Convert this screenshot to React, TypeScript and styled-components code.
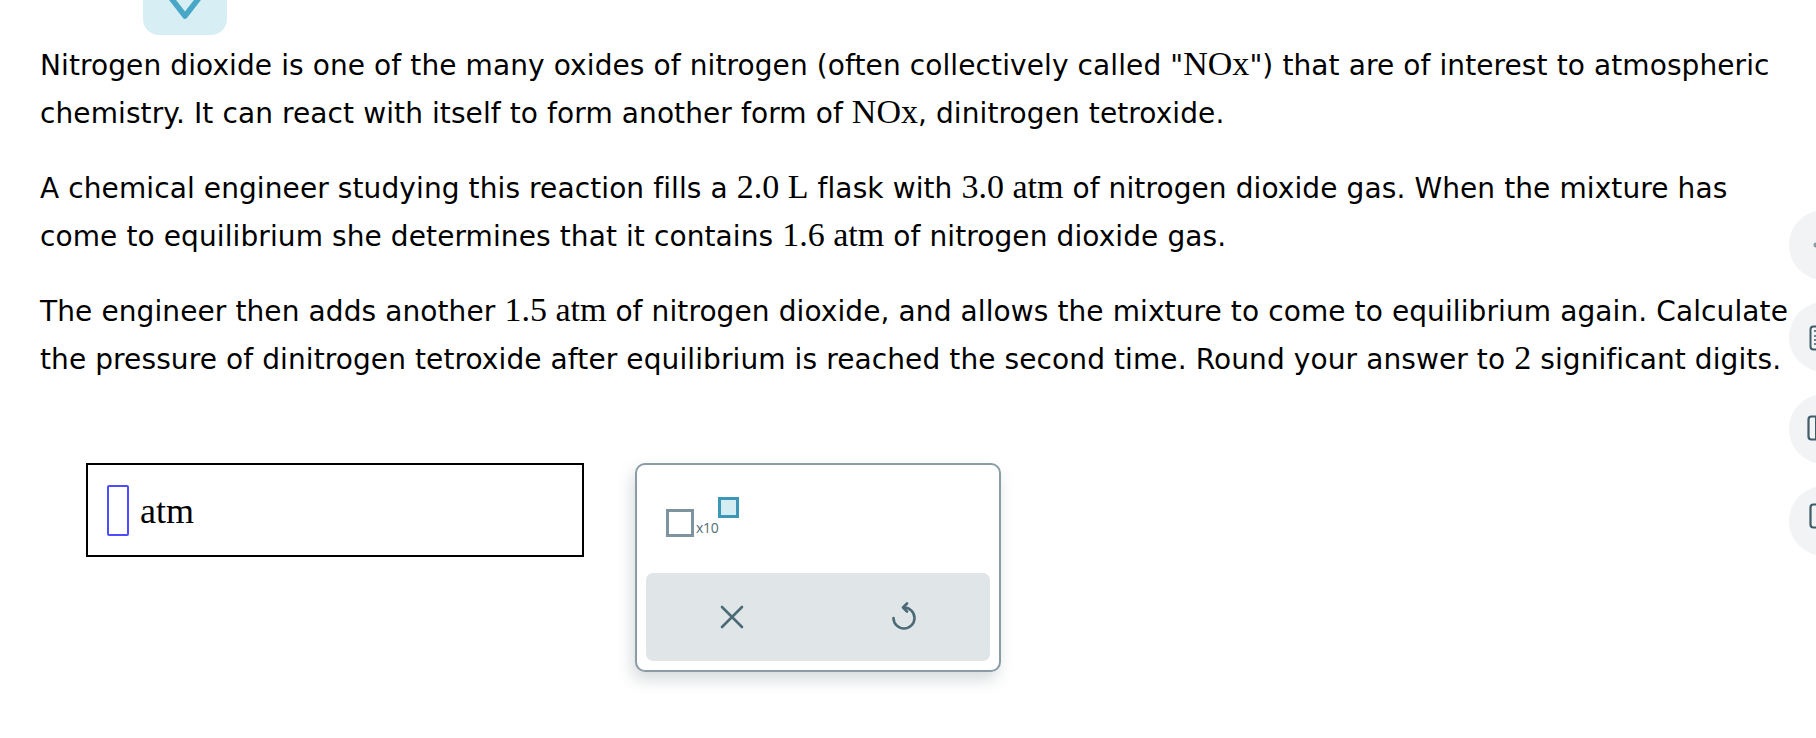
import React from "react";
import styled, { createGlobalStyle } from "styled-components";

const GlobalStyle = createGlobalStyle`
  html, body {
    margin: 0;
    padding: 0;
    background: #ffffff;
  }
  body {
    font-family: "DejaVu Sans", Verdana, sans-serif;
    color: #000;
    overflow: hidden;
  }
`;

const Page = styled.div`
  position: relative;
  width: 1816px;
  height: 738px;
  padding-left: 40px;
  box-sizing: border-box;
`;

const CollapseTab = styled.button`
  display: flex;
  justify-content: center;
  align-items: flex-start;
  margin-left: 103px;
  width: 84px;
  height: 35px;
  padding: 0;
  border: none;
  border-radius: 0 0 16px 16px;
  background: #d6eef4;
  overflow: hidden;
  cursor: pointer;
`;

const Question = styled.div`
  margin-top: 7px;
  font-size: 28px;
  letter-spacing: 0.1px;
  line-height: 47.5px;
`;

const Para = styled.p`
  margin: 0 0 28px;
  white-space: nowrap;
`;

const MathText = styled.span`
  font-family: "Liberation Serif", "Times New Roman", serif;
  font-size: 34px;
  letter-spacing: 0;
  line-height: 1;
`;

const AnswerRow = styled.div`
  display: flex;
  align-items: flex-start;
  margin-top: 80px;
  margin-left: 46px;
  gap: 51px;
`;

const AnswerBox = styled.div`
  display: flex;
  align-items: center;
  gap: 11px;
  width: 498px;
  height: 94px;
  box-sizing: border-box;
  border: 2px solid #000;
  padding-left: 19px;
`;

const Cursor = styled.div`
  width: 22px;
  height: 51px;
  box-sizing: border-box;
  border: 2px solid #4d4dff;
  border-radius: 2px;
`;

const Unit = styled.span`
  font-family: "Liberation Serif", "Times New Roman", serif;
  font-size: 36px;
  margin-top: 2px;
`;

const Keypad = styled.div`
  display: flex;
  flex-direction: column;
  width: 366px;
  height: 209px;
  box-sizing: border-box;
  border: 2px solid #8a9da7;
  border-radius: 10px;
  padding: 0 9px 9px;
  background: #fff;
  box-shadow: -3px 8px 16px rgba(60, 80, 90, 0.2);
`;

const KeyArea = styled.div`
  flex: 1;
  padding: 32px 0 0 20px;
`;

const SciKey = styled.button`
  display: flex;
  align-items: flex-start;
  padding: 0;
  border: none;
  background: none;
  cursor: pointer;
`;

const Slot = styled.span<{ $active?: boolean; $size: number }>`
  display: block;
  width: ${(p) => p.$size}px;
  height: ${(p) => p.$size}px;
  box-sizing: border-box;
  border: 3px solid ${(p) => (p.$active ? "#3b97b5" : "#7d949e")};
  background: ${(p) => (p.$active ? "#d4edf3" : "#fff")};
`;

const Base = styled.span`
  align-self: flex-end;
  font-family: "Open Sans", "DejaVu Sans", sans-serif;
  font-size: 14px;
  line-height: 14px;
  color: #4f6e7a;
  margin: 0 0 2px 2px;
  letter-spacing: -0.3px;
`;

const ActionBar = styled.div`
  display: flex;
  height: 88px;
  border-radius: 7px;
  background: #e0e5e8;
`;

const ActionButton = styled.button`
  flex: 1;
  display: flex;
  align-items: center;
  justify-content: center;
  padding: 0;
  border: none;
  background: none;
  color: #4b6a76;
  cursor: pointer;
`;

const ToolRail = styled.div`
  position: absolute;
  left: 1789px;
  top: 210px;
  display: flex;
  flex-direction: column;
  gap: 22px;
`;

const RailButton = styled.div`
  position: relative;
  width: 70px;
  height: 70px;
  border-radius: 50%;
  background: #f1f3f5;
`;

const RailIcon = styled.svg<{ $left: number; $top: number }>`
  position: absolute;
  left: ${(p) => p.$left}px;
  top: ${(p) => p.$top}px;
`;

function Chevron() {
  return (
    <svg width="40" height="22" viewBox="0 0 40 22">
      <path d="M6 -2 L20 16 L34 -2" fill="none" stroke="#48a7c6" strokeWidth="5.5" strokeLinecap="round" strokeLinejoin="round" />
    </svg>
  );
}

function ClearIcon() {
  return (
    <svg width="26" height="26" viewBox="0 0 26 26">
      <path d="M3 3 L23 23 M23 3 L3 23" stroke="currentColor" strokeWidth="2.6" strokeLinecap="round" />
    </svg>
  );
}

function UndoIcon() {
  return (
    <svg width="30" height="30" viewBox="0 0 30 30">
      <path d="M15 5.5 A10.5 10.5 0 1 1 4.5 16" fill="none" stroke="currentColor" strokeWidth="2.6" strokeLinecap="round" />
      <path d="M18 1.5 L14 5.5 L18 9.5" fill="none" stroke="currentColor" strokeWidth="2.6" strokeLinecap="round" strokeLinejoin="round" />
    </svg>
  );
}

export default function App() {
  return (
    <>
      <GlobalStyle />
      <Page>
        <CollapseTab aria-label="Collapse">
          <Chevron />
        </CollapseTab>

        <Question>
          <Para>
            Nitrogen dioxide is one of the many oxides of nitrogen (often collectively called "<MathText>NOx</MathText>") that are of interest to atmospheric
            <br />
            chemistry. It can react with itself to form another form of <MathText>NOx</MathText>, dinitrogen tetroxide.
          </Para>
          <Para>
            A chemical engineer studying this reaction fills a <MathText>2.0 L</MathText> flask with <MathText>3.0 atm</MathText> of nitrogen dioxide gas. When the mixture has
            <br />
            come to equilibrium she determines that it contains <MathText>1.6 atm</MathText> of nitrogen dioxide gas.
          </Para>
          <Para>
            The engineer then adds another <MathText>1.5 atm</MathText> of nitrogen dioxide, and allows the mixture to come to equilibrium again. Calculate
            <br />
            the pressure of dinitrogen tetroxide after equilibrium is reached the second time. Round your answer to <MathText>2</MathText> significant digits.
          </Para>
        </Question>

        <AnswerRow>
          <AnswerBox>
            <Cursor />
            <Unit>atm</Unit>
          </AnswerBox>

          <Keypad>
            <KeyArea>
              <SciKey aria-label="scientific notation">
                <Slot $size={28} style={{ marginTop: 12 }} />
                <Base>x10</Base>
                <Slot $size={21} $active />
              </SciKey>
            </KeyArea>
            <ActionBar>
              <ActionButton aria-label="Clear">
                <ClearIcon />
              </ActionButton>
              <ActionButton aria-label="Undo">
                <UndoIcon />
              </ActionButton>
            </ActionBar>
          </Keypad>
        </AnswerRow>

        <ToolRail>
          <RailButton>
            <RailIcon $left={22} $top={30} width="20" height="10" viewBox="0 0 20 10">
              <circle cx="5" cy="5" r="2.5" fill="#8a9aa2" />
            </RailIcon>
          </RailButton>
          <RailButton>
            <RailIcon $left={20} $top={23} width="22" height="26" viewBox="0 0 22 26">
              <rect x="1.5" y="1.5" width="19" height="23" rx="3" fill="none" stroke="#3f5c68" strokeWidth="2" />
              <path d="M5 6 H17 M5 11 H8 M10 11 H12 M14 11 H17 M5 15 H8 M10 15 H12 M5 19 H8 M10 19 H12" stroke="#3f5c68" strokeWidth="1.6" />
            </RailIcon>
          </RailButton>
          <RailButton>
            <RailIcon $left={18} $top={21} width="24" height="26" viewBox="0 0 24 26">
              <rect x="1.5" y="1.5" width="21" height="23" rx="3" fill="none" stroke="#3f5c68" strokeWidth="2.2" />
              <path d="M9 2 V24" stroke="#3f5c68" strokeWidth="2" />
            </RailIcon>
          </RailButton>
          <RailButton>
            <RailIcon $left={20} $top={17} width="24" height="26" viewBox="0 0 24 26">
              <rect x="1.5" y="1.5" width="21" height="23" rx="3" fill="none" stroke="#3f5c68" strokeWidth="2.2" />
            </RailIcon>
          </RailButton>
        </ToolRail>
      </Page>
    </>
  );
}
